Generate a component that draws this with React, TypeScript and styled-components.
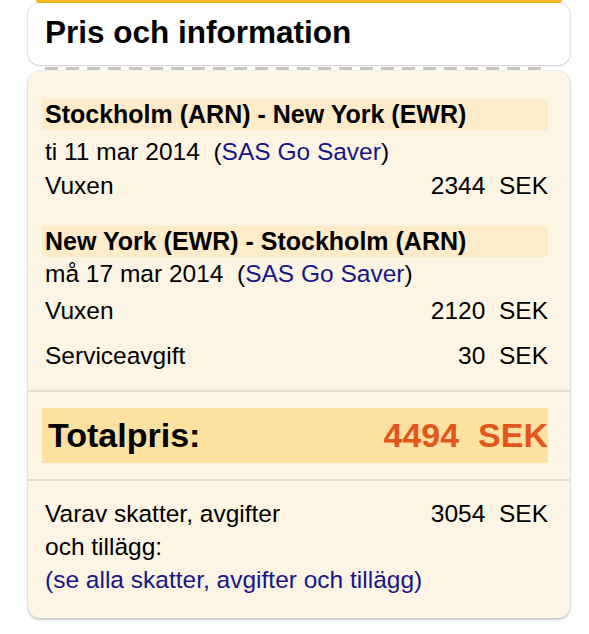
import React from "react";
import styled, { createGlobalStyle } from "styled-components";

const Global = createGlobalStyle`
  html, body { margin: 0; padding: 0; background: #ffffff; }
  body { font-family: "Liberation Sans", Arial, Helvetica, sans-serif; color: #000; }
`;

const Page = styled.div`
  width: 589px;
  padding: 0 19px 16px 28px;
  box-sizing: border-box;
  display: flex;
  flex-direction: column;
  font-family: "Liberation Sans", Arial, Helvetica, sans-serif;
`;

const TopStrip = styled.div`
  height: 3px;
  margin: 0 8px 0 8px;
  background: #f8b823;
  border-radius: 0 0 6px 6px;
`;

const HeaderCard = styled.div`
  height: 62px;
  background: #ffffff;
  border-radius: 12px;
  box-shadow: 0 0 2px rgba(0, 0, 0, 0.28), 0 1px 2px rgba(0, 0, 0, 0.12);
  display: flex;
  align-items: center;
  padding: 0 17px;
  box-sizing: border-box;
`;

const Title = styled.h1`
  margin: 0;
  font-size: 31.5px;
  font-weight: bold;
  padding-bottom: 3px;
`;

const Dashes = styled.div`
  height: 3px;
  margin: 2px 24px 1px 17px;
  background-image: linear-gradient(to right, #cbc6bd 0 13px, transparent 13px 21px);
  background-size: 21px 3px;
  background-repeat: repeat-x;
`;

const BodyCard = styled.div`
  background: #fdf5e3;
  border-radius: 12px;
  box-shadow: 0 0 2px rgba(0, 0, 0, 0.2), 0 2px 3px rgba(0, 0, 0, 0.18);
  padding: 28px 0 22px 0;
  display: flex;
  flex-direction: column;
`;

const Section = styled.div<{ $gap?: number }>`
  padding: 0 22px 0 14px;
  display: flex;
  flex-direction: column;
  margin-bottom: ${(p) => p.$gap ?? 0}px;
`;

const RouteHeader = styled.div`
  height: 31px;
  background: #fdebc9;
  display: flex;
  align-items: center;
  padding-left: 3px;
  font-size: 25px;
  font-weight: bold;
  white-space: nowrap;
`;

const Line = styled.div<{ $top?: number }>`
  height: 34px;
  margin-top: ${(p) => p.$top ?? 0}px;
  display: flex;
  align-items: center;
  justify-content: space-between;
  padding-left: 3px;
  font-size: 24.5px;
  white-space: nowrap;
`;

const Amount = styled.span`
  white-space: pre;
`;

const Link = styled.a`
  color: #16168a;
  text-decoration: none;
`;

const Divider = styled.hr`
  border: none;
  border-top: 2px solid #e4ddcf;
  margin: 0;
  width: 100%;
`;

const TotalBox = styled.div`
  height: 55px;
  margin: 16px 22px 16px 14px;
  background: #fde1a1;
  display: flex;
  align-items: center;
  justify-content: space-between;
  padding: 0 0 0 6px;
  font-size: 34px;
  font-weight: bold;
`;

const TotalPrice = styled.span`
  color: #e2561b;
  white-space: pre;
`;

const TaxRow = styled.div<{ $top?: number }>`
  display: flex;
  justify-content: space-between;
  align-items: flex-start;
  margin-top: ${(p) => p.$top ?? 0}px;
  padding-left: 3px;
  font-size: 24.5px;
  line-height: 33px;
`;

const TaxLabel = styled.div`
  width: 262px;
`;

export default function App() {
  return (
    <Page>
      <Global />
      <TopStrip />
      <HeaderCard>
        <Title>Pris och information</Title>
      </HeaderCard>
      <Dashes />
      <BodyCard>
        <Section $gap={23}>
          <RouteHeader>Stockholm (ARN) - New York (EWR)</RouteHeader>
          <Line $top={5}>
            <span>
              ti 11 mar 2014&nbsp;&nbsp;(<Link href="#">SAS Go Saver</Link>)
            </span>
          </Line>
          <Line>
            <span>Vuxen</span>
            <Amount>2344  SEK</Amount>
          </Line>
        </Section>
        <Section $gap={17}>
          <RouteHeader>New York (EWR) - Stockholm (ARN)</RouteHeader>
          <Line>
            <span>
              må 17 mar 2014&nbsp;&nbsp;(<Link href="#">SAS Go Saver</Link>)
            </span>
          </Line>
          <Line $top={3}>
            <span>Vuxen</span>
            <Amount>2120  SEK</Amount>
          </Line>
          <Line $top={11}>
            <span>Serviceavgift</span>
            <Amount>30  SEK</Amount>
          </Line>
        </Section>
        <Divider />
        <TotalBox>
          <span>Totalpris:</span>
          <TotalPrice>4494  SEK</TotalPrice>
        </TotalBox>
        <Divider />
        <Section>
          <TaxRow $top={16}>
            <TaxLabel>Varav skatter, avgifter och tillägg:</TaxLabel>
            <Amount>3054  SEK</Amount>
          </TaxRow>
          <TaxRow>
            <Link href="#">(se alla skatter, avgifter och tillägg)</Link>
          </TaxRow>
        </Section>
      </BodyCard>
    </Page>
  );
}
